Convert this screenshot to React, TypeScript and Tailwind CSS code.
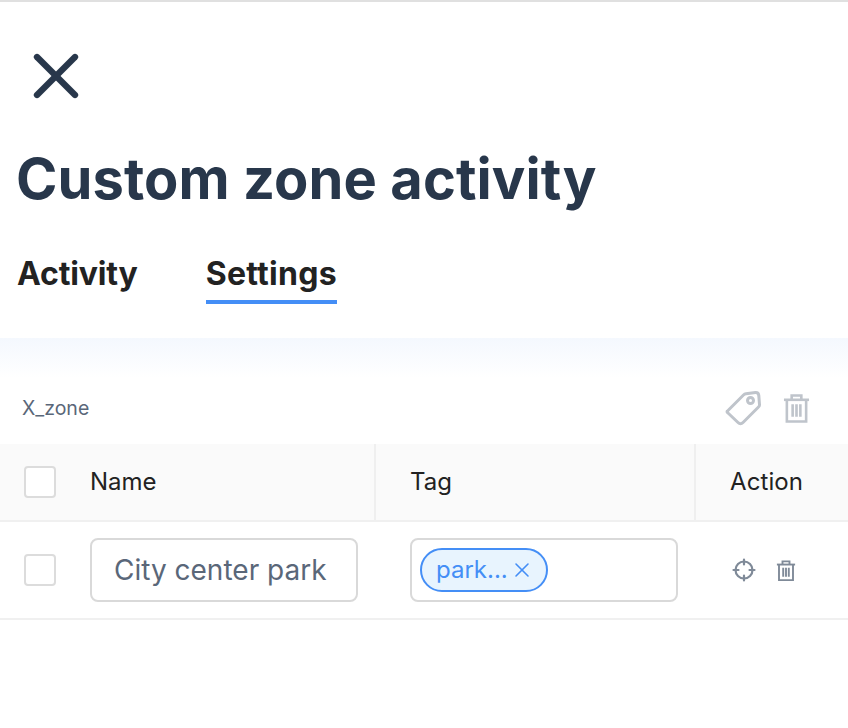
import { X } from "lucide-react";

function TrashIcon({ className }: { className: string }) {
  return (
    <svg viewBox="0 0 28 30" fill="none" stroke="currentColor" strokeWidth="2.7" className={className}>
      <path d="M1 6.5h26" />
      <path d="M9 6V2h10v4" />
      <path d="M4 6.5V29h20V6.5" />
      <path d="M10 11v13M14 11v13M18 11v13" />
    </svg>
  );
}

function TagIcon() {
  return (
    <svg viewBox="0 0 36 36" fill="none" stroke="currentColor" strokeWidth="3" strokeLinejoin="round" className="w-9 h-9 text-[#bfc4cb]">
      <path d="M3 20.5 L18.5 5 Q19.5 4 21 3.8 L30.5 2.5 Q33.5 2.3 33.8 5.5 L34.5 14.5 Q34.6 16 33.5 17 L18 32.5 Q15.5 35 13 32.5 L3 23 Q1 21.5 3 20.5 Z" />
      <circle cx="25.5" cy="10.5" r="3" />
    </svg>
  );
}

function TargetIcon() {
  return (
    <svg viewBox="0 0 24 24" fill="none" stroke="currentColor" strokeWidth="2.2" strokeLinecap="round" className="w-6 h-6 text-[#7f8a98]">
      <circle cx="12" cy="12" r="8.5" />
      <path d="M12 1.5v5M12 17.5v5M1.5 12h5M17.5 12h5" />
    </svg>
  );
}

function Checkbox() {
  return <div className="w-8 h-8 rounded-[4px] border-2 border-[#dcdcdc] bg-white" />;
}

export default function App() {
  return (
    <div className="w-[848px] h-[728px] overflow-hidden bg-white border-t-2 border-[#e0e0e0] font-['Inter',sans-serif]">
      <div className="pl-[17px] pt-[36px] h-[336px]">
        <button className="block ml-[1px] w-[76px] h-[76px] text-[#28374b]">
          <X className="w-[76px] h-[76px]" strokeWidth={2} />
        </button>
        <h1 className="mt-[33px] -ml-[1px] text-[56px] leading-[64px] font-bold tracking-[0.1px] text-[#28374b]">Custom zone activity</h1>
        <div className="mt-[43px] flex gap-[68px] text-[32px] leading-[40px] font-bold text-[#222222]">
          <span className="h-[50px] tracking-[-0.15px]">Activity</span>
          <span className="h-[50px] tracking-[0.25px] border-b-4 border-[#448ef6]">Settings</span>
        </div>
      </div>
      <div className="h-[40px] bg-gradient-to-b from-[#f4f8fe] to-white" />
      <div className="h-[66px] pl-[22px] pr-[38px] pb-[6px] flex items-center justify-between">
        <span className="mt-[2px] text-[19.5px] text-[#5a6779]">X_zone</span>
        <div className="flex items-center gap-[22px]">
          <TagIcon />
          <TrashIcon className="w-[27px] h-[30px] text-[#bfc4cb]" />
        </div>
      </div>
      <div className="flex h-[78px] bg-[#fafafa] border-b-2 border-[#f0f0f0] text-[24px] text-[#222222]">
        <div className="w-[90px] pl-[24px] flex items-center"><Checkbox /></div>
        <div className="w-[286px] border-r-2 border-[#efefef] flex items-center">Name</div>
        <div className="w-[320px] pl-[34px] border-r-2 border-[#efefef] flex items-center">Tag</div>
        <div className="flex-1 pl-[34px] flex items-center tracking-[0.1px]">Action</div>
      </div>
      <div className="flex h-[98px] items-center border-b-2 border-[#f0f0f0]">
        <div className="w-[90px] pl-[24px]"><Checkbox /></div>
        <div className="w-[286px]">
          <div className="w-[268px] h-[64px] rounded-lg border-2 border-[#d9d9d9] pl-[22px] flex items-center text-[28px] text-[#5a6779]">City center park</div>
        </div>
        <div className="w-[320px] pl-[34px]">
          <div className="w-[268px] h-[64px] rounded-lg border-2 border-[#d9d9d9] pl-[8px] flex items-center">
            <div className="h-[44px] w-[128px] rounded-full border-2 border-[#448ef6] bg-[#e8f4fe] pl-[14px] flex items-center gap-[2px] text-[24px] text-[#448ef6]">
              <span>park...</span>
              <X className="w-[24px] h-[24px]" strokeWidth={1.6} />
            </div>
          </div>
        </div>
        <div className="flex-1 pl-[36px] flex items-center gap-[20px]">
          <TargetIcon />
          <TrashIcon className="w-[20px] h-[21px] text-[#7f8a98]" />
        </div>
      </div>
    </div>
  );
}
